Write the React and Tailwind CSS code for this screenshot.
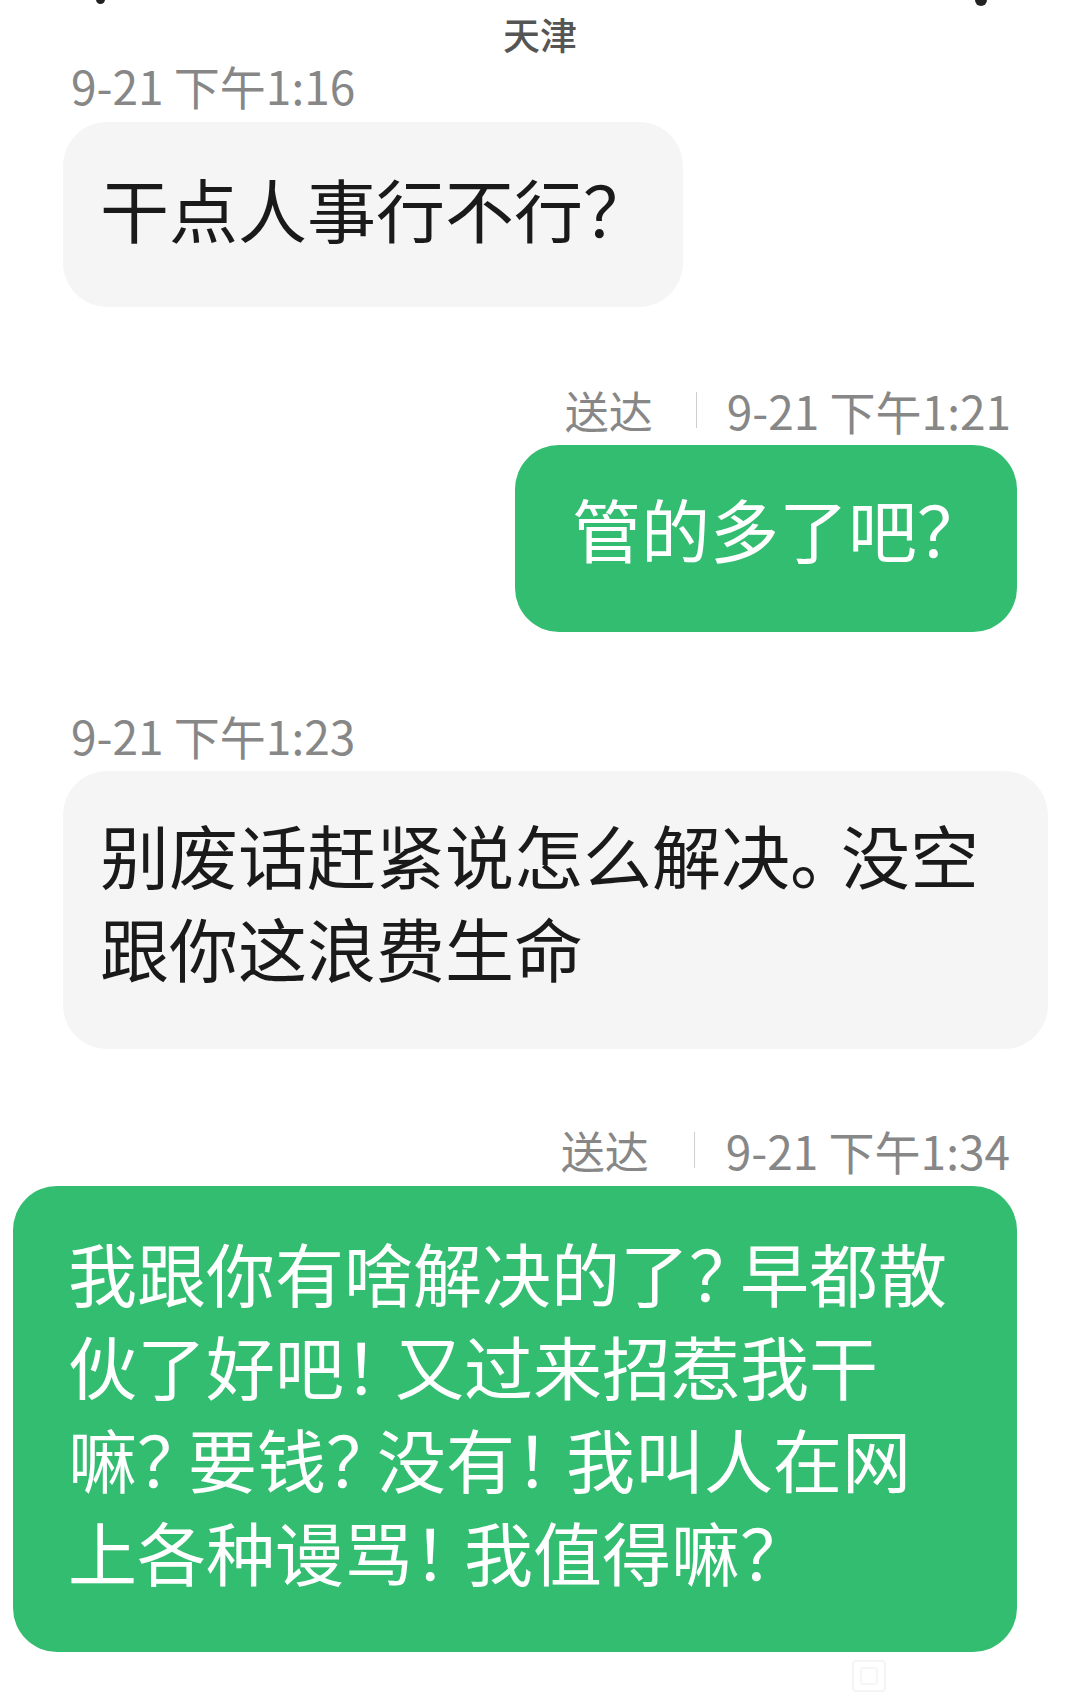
import React from "react";

const GREEN = "bg-[#33bd70]";

// full-width punctuation in the reference advances narrower than one em
function P({ children }) {
  return <span className="tracking-[-18px]">{children}</span>;
}

function Stamp({ children }) {
  return (
    <div className="pl-[71px] text-[46px] leading-[52px] text-[#878787]">
      {children}
    </div>
  );
}

function Delivered({ time, pr, gapLeft, gapRight }) {
  return (
    <div
      className={`flex items-center justify-end text-[46px] leading-[52px] text-[#878787] ${pr}`}
    >
      <span className="text-[44px]">送达</span>
      <span className={`h-[36px] w-px bg-[#cfcfcf] ${gapLeft} ${gapRight}`} />
      <span>{time}</span>
    </div>
  );
}

export default function App() {
  return (
    <div className="relative h-[1708px] w-[1080px] overflow-hidden bg-white font-['Noto_Sans_CJK_SC',sans-serif]">
      {/* cut-off icons at the very top edge */}
      <div className="absolute left-[96px] top-[-5px] h-[9px] w-[9px] rounded-full bg-[#222]" />
      <div className="absolute left-[975px] top-[-7px] h-[13px] w-[12px] rounded-full bg-[#222]" />

      <div className="pt-[12px] text-center text-[37px] font-medium leading-[44px] text-[#555]">
        天津
      </div>

      <div className="mt-[3px]">
        <Stamp>9-21 下午1:16</Stamp>
      </div>

      <div className="mt-[11px] pl-[63px]">
        <div className="h-[185px] w-[620px] rounded-[44px] bg-[#f5f5f5] pl-[37px] pt-[40px] text-[69px] leading-[93px] text-[#1a1a1a]">
          干点人事行不行？
        </div>
      </div>

      <div className="mt-[77px]">
        <Delivered time="9-21 下午1:21" pr="pr-[69px]" gapLeft="ml-[43px]" gapRight="mr-[30px]" />
      </div>

      <div className="mt-[9px] flex justify-end pr-[63px]">
        <div className={`h-[187px] w-[502px] rounded-[44px] ${GREEN} pl-[57px] pt-[37px] text-[69px] leading-[93px] text-white`}>
          管的多了吧？
        </div>
      </div>

      <div className="mt-[77px]">
        <Stamp>9-21 下午1:23</Stamp>
      </div>

      <div className="mt-[10px] pl-[63px]">
        <div className="h-[278px] w-[985px] rounded-[44px] bg-[#f5f5f5] pl-[37px] pt-[37px] text-[69px] leading-[93px] text-[#1a1a1a]">
          别废话赶紧说怎么解决<P>。</P>没空
          <br />
          跟你这浪费生命
        </div>
      </div>

      <div className="mt-[75px]">
        <Delivered time="9-21 下午1:34" pr="pr-[70px]" gapLeft="ml-[45px]" gapRight="mr-[31px]" />
      </div>

      <div className="mt-[10px] pl-[13px]">
        <div className={`h-[466px] w-[1004px] rounded-[44px] ${GREEN} pl-[55px] pt-[40px] text-[69px] leading-[93px] text-white`}>
          我跟你有啥解决的了<P>？</P>早都散
          <br />
          伙了好吧<P>！</P>又过来招惹我干
          <br />
          嘛<P>？</P>要钱<P>？</P>没有<P>！</P>我叫人在网
          <br />
          上各种谩骂<P>！</P>我值得嘛？
        </div>
      </div>

      <div className="mt-[8px] pl-[852px]">
        <svg width="34" height="32" viewBox="0 0 34 32" fill="none">
          <rect x="1" y="1" width="32" height="30" rx="3" stroke="#f5f5f5" strokeWidth="2" />
          <rect x="9" y="8" width="16" height="16" rx="2" stroke="#f6f6f6" strokeWidth="2" />
        </svg>
      </div>
    </div>
  );
}
